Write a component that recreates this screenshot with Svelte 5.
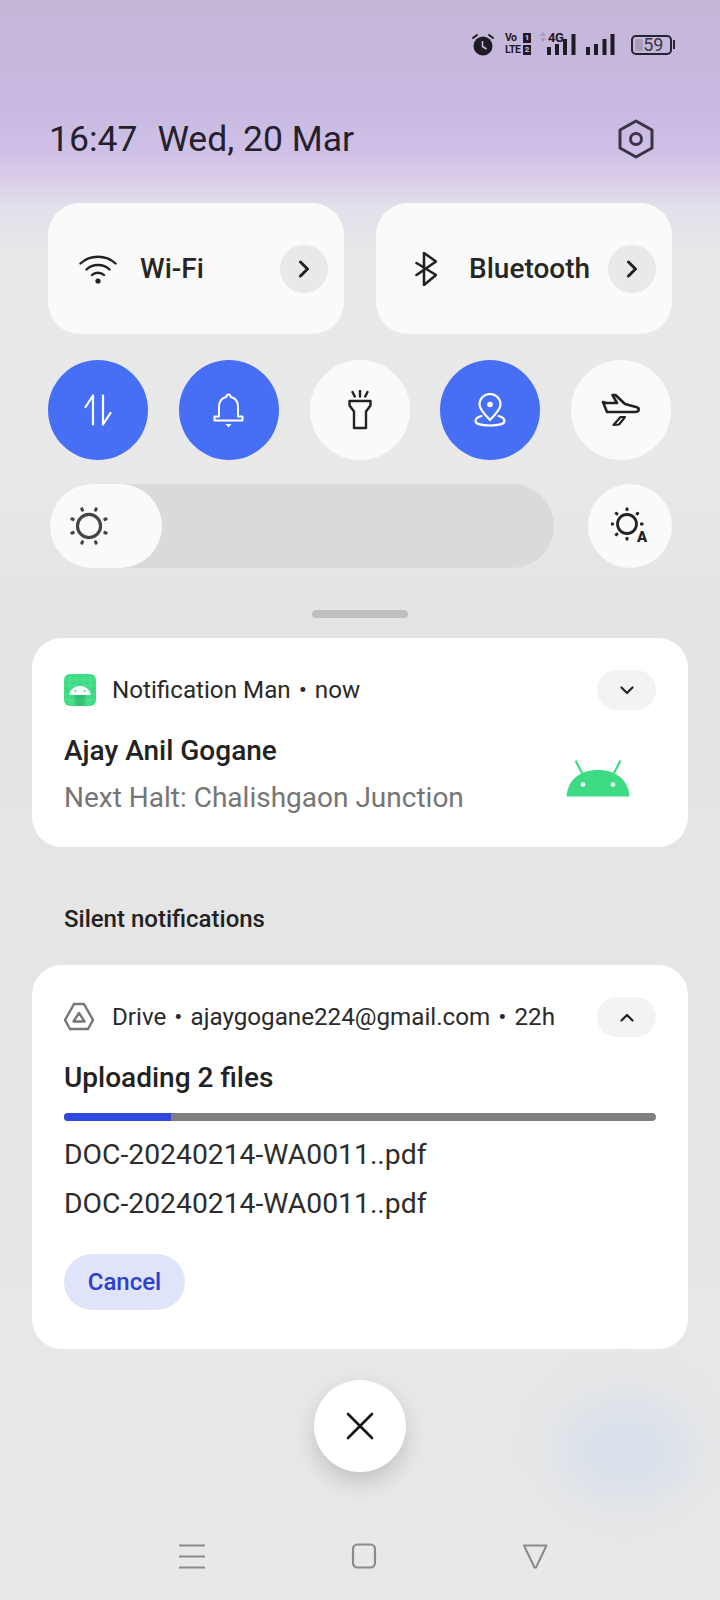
<script>
  const circles = [
    { on: true, icon: 'data' },
    { on: true, icon: 'bell' },
    { on: false, icon: 'torch' },
    { on: true, icon: 'pin' },
    { on: false, icon: 'plane' }
  ];
  const rays = [0, 45, 90, 135, 180, 225, 270, 315];
  const autoRays = [0, 45, 90, 180, 225, 270, 315];
</script>

<div class="page">
  <div class="blob"></div>

  <div class="status">
    <svg class="alarm" width="22" height="23" viewBox="0 0 22 23">
      <circle cx="11" cy="13" r="9.500" fill="#1f1b26"/>
      <path d="M1 5l4-3M21 5l-4-3" stroke="#1f1b26" stroke-width="2" stroke-linecap="round"/>
      <path d="M10.500 8v5.500l4 2.500" stroke="#c6b8df" stroke-width="1.600" fill="none"/>
    </svg>
    <div class="volte">
      <div class="vrow"><span>Vo</span><b>1</b></div>
      <div class="vrow"><span>LTE</span><b>2</b></div>
    </div>
    <div class="net">
      <svg width="6" height="10" viewBox="0 0 6 10"><path d="M3 0L6 4H0zM3 10L0 6h6z" fill="#a79dba"/></svg>
      <span class="fourg">4G</span>
    </div>
    <svg class="sig1" width="30" height="21" viewBox="0 0 30 21">
      <rect x="0" y="13" width="4" height="8" fill="#1f1b26"/>
      <rect x="8" y="10" width="4" height="11" fill="#1f1b26"/>
      <rect x="16" y="5" width="4" height="16" fill="#1f1b26"/>
      <rect x="24.500" y="0" width="4" height="21" fill="#1f1b26"/>
    </svg>
    <svg class="sig2" width="30" height="21" viewBox="0 0 30 21">
      <rect x="0" y="13" width="4" height="8" fill="#1f1b26"/>
      <rect x="8" y="10" width="4" height="11" fill="#1f1b26"/>
      <rect x="16.500" y="5" width="4" height="16" fill="#1f1b26"/>
      <rect x="24.500" y="0" width="4" height="21" fill="#1f1b26"/>
    </svg>
    <div class="battery">
      <div class="charge"></div>
      <span>59</span>
    </div>
    <div class="tip"></div>
  </div>

  <div class="clock">
    <span class="time">16:47</span>
    <span class="date">Wed, 20 Mar</span>
    <svg class="gear" width="36" height="40" viewBox="0 0 36 40">
      <path d="M18 2L34 11V29L18 38L2 29V11Z" fill="none" stroke="#3a3444" stroke-width="3" stroke-linejoin="round"/>
      <circle cx="18" cy="20" r="5.500" fill="none" stroke="#3a3444" stroke-width="3"/>
    </svg>
  </div>

  <div class="tiles">
    <div class="tile">
      <svg class="tile-icon" width="38" height="31" viewBox="0 0 38 31">
        <path d="M1.500 10.500C11 1.500 27 1.500 36.500 10.500M7.500 16.500C13.500 10.500 24.500 10.500 30.500 16.500M13 22C16 19 22 19 25 22" fill="none" stroke="#222" stroke-width="2.400" stroke-linecap="round"/>
        <circle cx="19" cy="28" r="2.600" fill="#222"/>
      </svg>
      <span class="tile-label wifi">Wi-Fi</span>
      <div class="arrow">
        <svg width="12" height="18" viewBox="0 0 12 18"><path d="M2.500 2L9.500 9L2.500 16" fill="none" stroke="#222" stroke-width="3" stroke-linecap="round" stroke-linejoin="round"/></svg>
      </div>
    </div>
    <div class="tile">
      <svg class="tile-icon bt" width="22" height="34" viewBox="0 0 22 34">
        <path d="M1.500 11L21 23L9 33V1L21 9.500L1.500 23" fill="none" stroke="#222" stroke-width="2.600" stroke-linejoin="round" stroke-linecap="round"/>
      </svg>
      <span class="tile-label bluetooth">Bluetooth</span>
      <div class="arrow">
        <svg width="12" height="18" viewBox="0 0 12 18"><path d="M2.500 2L9.500 9L2.500 16" fill="none" stroke="#222" stroke-width="3" stroke-linecap="round" stroke-linejoin="round"/></svg>
      </div>
    </div>
  </div>

  <div class="circles">
    {#each circles as c}
      <div class="circle" class:on={c.on}>
        {#if c.icon === 'data'}
          <svg width="28" height="32" viewBox="0 0 28 32"><path d="M1.500 13L9 1.500V30.500M26.500 19L19 30.500V1.500" fill="none" stroke="#fff" stroke-width="2.200" stroke-linecap="round" stroke-linejoin="round"/></svg>
        {:else if c.icon === 'bell'}
          <svg width="31" height="35" viewBox="0 0 31 35"><path d="M15.500 1.500a2 2 0 0 1 2 2.200C22.500 5 25 9 25 14V23.500H29.500V27.500H1.500V23.500H6V14C6 9 8.500 5 13.500 3.700A2 2 0 0 1 15.500 1.500Z" fill="none" stroke="#fff" stroke-width="2" stroke-linejoin="round"/><path d="M12.500 31h6l-3 3.500z" fill="#fff"/></svg>
        {:else if c.icon === 'torch'}
          <svg width="24" height="40" viewBox="0 0 24 40"><path d="M1.500 11H22.500V15.500L18 21.500V38H6V21.500L1.500 15.500Z" fill="none" stroke="#222" stroke-width="2.400" stroke-linejoin="round"/><path d="M12 1V6.500M4.500 2L6.800 6.500M19.500 2L17.200 6.500" stroke="#222" stroke-width="2.400" stroke-linecap="round"/></svg>
        {:else if c.icon === 'pin'}
          <svg width="32" height="34" viewBox="0 0 32 34"><path d="M16 27C10.500 21.500 5.500 16 5.500 11.500A10.500 10.500 0 0 1 26.500 11.500C26.500 16 21.500 21.500 16 27Z" fill="none" stroke="#fff" stroke-width="2.200" stroke-linejoin="round"/><circle cx="16" cy="11.500" r="2.800" fill="#fff"/><path d="M7.500 23C3.500 24 1.500 26 1.500 28C1.500 31 8 32.500 16 32.500S30.500 31 30.500 28C30.500 26 28.500 24 24.500 23" fill="none" stroke="#fff" stroke-width="2.200" stroke-linecap="round"/></svg>
        {:else}
          <svg width="40" height="34" viewBox="12 9 40 34"><path d="M14 18L18 28H46C50.500 28 51 24 47 23L36 20L26.500 11H23.500L28 19H17Z" fill="none" stroke="#222" stroke-width="2.600" stroke-linejoin="round"/><path d="M24.500 41L31.500 33H36L30 40.500Z" fill="none" stroke="#222" stroke-width="2.200" stroke-linejoin="round"/></svg>
        {/if}
      </div>
    {/each}
  </div>

  <div class="bright">
    <div class="slider">
      <div class="thumb">
        <svg width="42" height="42" viewBox="0 0 40 40">
          <circle cx="20" cy="20" r="11" fill="none" stroke="#444" stroke-width="3"/>
          {#each rays as r}
            <rect x="18.500" y="1" width="3" height="4" rx="1" fill="#444" transform="rotate({r + 22.500} 20 20)"/>
          {/each}
        </svg>
      </div>
    </div>
    <div class="auto">
      <svg width="38" height="38" viewBox="0 0 38 38">
        <circle cx="16" cy="17" r="9.500" fill="none" stroke="#222" stroke-width="2.800"/>
        {#each autoRays as r}
          <rect x="14.500" y="0.500" width="3" height="3.500" rx="1" fill="#222" transform="rotate({r} 16 17)"/>
        {/each}
      </svg>
      <span class="auto-a">A</span>
    </div>
  </div>

  <div class="handle"></div>

  <div class="card card-one">
    <div class="head">
      <div class="app-icon">
        <svg width="32" height="32" viewBox="0 0 32 32">
          <rect width="32" height="32" rx="6" fill="#3ddc84"/>
          <path d="M6 0V32M12 0V32M20 0V32M26 0V32M0 6H32M0 12H32M0 20H32M0 26H32" stroke="#fff" stroke-opacity=".12" stroke-width="1"/>
          <path d="M10 21L12 32H20L22 21Z" fill="#2fae6a" fill-opacity=".6"/>
          <path d="M5.500 21C6 15.500 10 12 16 12S26 15.500 26.500 21Z" fill="#fff"/>
          <circle cx="11.500" cy="17" r="1" fill="#3ddc84"/><circle cx="20.500" cy="17" r="1" fill="#3ddc84"/>
        </svg>
      </div>
      <span class="meta">Notification Man <span class="dot">•</span> now</span>
      <div class="toggle">
        <svg width="14" height="9" viewBox="0 0 14 9"><path d="M1.500 1.500L7 7L12.500 1.500" fill="none" stroke="#222" stroke-width="2.200" stroke-linecap="round" stroke-linejoin="round"/></svg>
      </div>
    </div>
    <div class="msg">
      <div class="msg-text">
        <div class="title">Ajay Anil Gogane</div>
        <div class="sub">Next Halt: Chalishgaon Junction</div>
      </div>
      <svg class="droid" width="64" height="37" viewBox="0 0 64 37">
        <path d="M0.500 36.500C1.500 20 14 10 32 10S62.500 20 63.500 36.500Z" fill="#3ddc84"/>
        <path d="M16 13L10 1.500M48 13L54 1.500" stroke="#3ddc84" stroke-width="2.200" stroke-linecap="round"/>
        <circle cx="17" cy="24.500" r="2.300" fill="#fff"/><circle cx="47" cy="24.500" r="2.300" fill="#fff"/>
      </svg>
    </div>
  </div>

  <div class="silent">Silent notifications</div>

  <div class="card card-two">
    <div class="head">
      <div class="app-icon">
        <svg width="30" height="30" viewBox="0 0 30 30">
          <path d="M10 2H20L29 18L24 27H6L1 18Z" fill="none" stroke="#777" stroke-width="2.400" stroke-linejoin="round"/>
          <path d="M15 11L20.500 19.500H9.500Z" fill="none" stroke="#777" stroke-width="2.400" stroke-linejoin="round"/>
        </svg>
      </div>
      <span class="meta">Drive <span class="dot">•</span> ajaygogane224@gmail.com <span class="dot">•</span> 22h</span>
      <div class="toggle">
        <svg width="14" height="9" viewBox="0 0 14 9"><path d="M1.500 7.500L7 2L12.500 7.500" fill="none" stroke="#222" stroke-width="2.200" stroke-linecap="round" stroke-linejoin="round"/></svg>
      </div>
    </div>
    <div class="title upload">Uploading 2 files</div>
    <div class="progress"><div class="bar" style="width: 18%"></div></div>
    <div class="file first">DOC-20240214-WA0011..pdf</div>
    <div class="file">DOC-20240214-WA0011..pdf</div>
    <div class="cancel">Cancel</div>
  </div>

  <div class="fab">
    <svg width="30" height="30" viewBox="0 0 30 30"><path d="M3 3L27 27M27 3L3 27" stroke="#111" stroke-width="2.600" stroke-linecap="round"/></svg>
  </div>

  <div class="nav">
    <svg width="26" height="25" viewBox="0 0 26 25"><path d="M0 1.500H26M0 12.500H26M0 23.500H26" stroke="#8a8a8a" stroke-width="2.200"/></svg>
    <svg width="26" height="26" viewBox="0 0 26 26"><rect x="2" y="1.500" width="22" height="23" rx="4.500" fill="none" stroke="#8a8a8a" stroke-width="2.200"/></svg>
    <svg width="26" height="26" viewBox="0 0 26 26"><path d="M2 2.500H24.500L14 24.500H12.500Z" fill="none" stroke="#8a8a8a" stroke-width="2" stroke-linejoin="round"/></svg>
  </div>
</div>

<style>
  :global(body) {
    margin: 0;
    background: #e6e6e6;
  }
  .page {
    position: relative;
    width: 720px;
    height: 1600px;
    overflow: hidden;
    box-sizing: border-box;
    font-family: Roboto, "Liberation Sans", sans-serif;
    color: #222;
    background: linear-gradient(#c3b6d6 0, #c9bae3 115px, #cec0e6 150px, #d9cde9 180px, #e2dfeb 205px, #e7e9e8 260px, #e8e9e8 460px, #e4e4e4 600px, #e8e8e8 1500px);
  }
  .blob {
    position: absolute;
    left: 555px;
    top: 1395px;
    width: 140px;
    height: 110px;
    border-radius: 50%;
    background: #d9e0ea;
    filter: blur(24px);
  }

  .status {
    position: relative;
    display: flex;
    align-items: center;
    height: 44px;
    padding: 22px 0 0 472px;
    box-sizing: content-box;
  }
  .volte {
    margin-left: 11px;
    width: 26px;
    font-size: 10.500px;
    font-weight: 700;
    letter-spacing: -0.500px;
    line-height: 12.500px;
    color: #1f1b26;
  }
  .vrow {
    display: flex;
    justify-content: space-between;
    align-items: center;
  }
  .vrow span {
    white-space: nowrap;
  }
  .vrow b {
    background: #1f1b26;
    color: #c6b8df;
    font-size: 8px;
    letter-spacing: 0;
    width: 8px;
    height: 10px;
    line-height: 10px;
    text-align: center;
  }
  .net {
    display: flex;
    align-items: flex-start;
    gap: 2px;
    margin-left: 9px;
    height: 21px;
    margin-top: -3px;
  }
  .fourg {
    font-size: 13px;
    font-weight: 700;
    line-height: 11px;
    color: #1f1b26;
    letter-spacing: -0.500px;
  }
  .sig1 { margin-left: -16px; margin-top: 1px; }
  .sig2 { margin-left: 9px; margin-top: 1px; }
  .battery {
    position: relative;
    margin-left: 15px;
    width: 34px;
    height: 16px;
    border: 2px solid #27222f;
    border-radius: 5px;
    display: flex;
    align-items: center;
    justify-content: center;
    font-size: 18px;
    color: #3a3444;
    padding-left: 3px;
    margin-top: 1px;
  }
  .battery span { position: relative; }
  .charge {
    position: absolute;
    left: 2px;
    top: 2px;
    bottom: 2px;
    width: 8px;
    background: #a79dba;
    border-radius: 2px;
  }
  .tip {
    width: 2px;
    height: 9px;
    margin-left: 1px;
    margin-top: 1px;
    background: #27222f;
  }

  .clock {
    display: flex;
    align-items: center;
    height: 40px;
    margin-top: 53px;
    padding: 0 66px 0 49px;
    font-size: 35.500px;
    color: #25212c;
  }
  .date { margin-left: 20px; }
  .gear { margin-left: auto; }

  .tiles {
    display: flex;
    gap: 32px;
    margin: 44px 48px 0;
  }
  .tile {
    flex: 1;
    height: 131px;
    display: flex;
    align-items: center;
    box-sizing: border-box;
    padding: 0 16px 0 31px;
    background: #fafafa;
    border-radius: 32px;
  }
  .tile-icon { flex: none; }
  .tile-label {
    font-size: 28px;
    font-weight: 500;
    color: #262626;
  }
  .wifi { margin-left: 23px; }
  .bt { margin-left: 8px; }
  .bluetooth { margin-left: 32px; }
  .arrow {
    margin-left: auto;
    width: 48px;
    height: 48px;
    border-radius: 50%;
    background: #e9e9e9;
    display: flex;
    align-items: center;
    justify-content: center;
  }

  .circles {
    display: flex;
    justify-content: space-between;
    margin: 26px 49px 0 48px;
  }
  .circle {
    width: 100px;
    height: 100px;
    border-radius: 50%;
    background: #fafafa;
    display: flex;
    align-items: center;
    justify-content: center;
  }
  .circle.on { background: #476ff5; }

  .bright {
    display: flex;
    justify-content: space-between;
    margin: 24px 48px 0 50px;
  }
  .slider {
    width: 504px;
    height: 84px;
    border-radius: 42px;
    background: #d9dbda;
  }
  .thumb {
    width: 112px;
    height: 84px;
    border-radius: 42px;
    background: #fafafa;
    display: flex;
    align-items: center;
    padding-left: 18px;
    box-sizing: border-box;
  }
  .auto {
    position: relative;
    width: 84px;
    height: 84px;
    border-radius: 50%;
    background: #fafafa;
    display: flex;
    align-items: center;
    justify-content: center;
  }
  .auto-a {
    position: absolute;
    left: 49px;
    top: 44px;
    font-size: 15px;
    font-weight: 900;
    line-height: 18px;
    color: #222;
  }

  .handle {
    width: 96px;
    height: 8px;
    margin: 42px auto 0;
    border-radius: 4px;
    background: #bfbfbf;
  }

  .card {
    position: relative;
    margin: 20px 32px 0;
    padding: 32px 32px 0;
    background: #fff;
    border-radius: 30px;
    box-sizing: border-box;
  }
  .card-one { height: 209px; }
  .card-two { height: 384px; margin-top: 0; }
  .head {
    display: flex;
    align-items: center;
    height: 40px;
  }
  .app-icon {
    width: 48px;
    flex: none;
    display: flex;
    align-items: center;
  }
  .meta {
    font-size: 24.200px;
    color: #2a2a2a;
    white-space: nowrap;
  }
  .dot { margin: 0 2px; }
  .toggle {
    margin-left: auto;
    width: 59px;
    height: 40px;
    border-radius: 20px;
    background: #f3f3f3;
    display: flex;
    align-items: center;
    justify-content: center;
  }
  .msg {
    display: flex;
    justify-content: space-between;
    align-items: flex-end;
  }
  .title {
    font-size: 28px;
    font-weight: 500;
    line-height: 32px;
    color: #222;
  }
  .msg-text { padding-top: 25px; }
  .sub {
    margin-top: 15px;
    font-size: 28px;
    line-height: 32px;
    color: #757575;
  }
  .droid { margin: 0 26px 17px 0; }

  .silent {
    height: 118px;
    box-sizing: border-box;
    padding: 57px 64px 0;
    font-size: 24px;
    font-weight: 500;
    line-height: 30px;
    color: #222;
  }

  .upload { margin-top: 25px; }
  .progress {
    height: 8px;
    margin-top: 19px;
    border-radius: 4px;
    background: #808080;
    overflow: hidden;
  }
  .bar {
    height: 100%;
    background: #2f49e0;
  }
  .file {
    font-size: 28.300px;
    line-height: 32px;
    color: #2d2d2d;
    margin-top: 17px;
  }
  .file.first { margin-top: 18px; }
  .cancel {
    width: 121px;
    height: 56px;
    margin-top: 34px;
    border-radius: 28px;
    background: #e0e4fb;
    color: #2d3fce;
    font-size: 24px;
    font-weight: 500;
    display: flex;
    align-items: center;
    justify-content: center;
  }

  .fab {
    position: relative;
    width: 92px;
    height: 92px;
    margin: 31px auto 0;
    border-radius: 50%;
    background: #fff;
    box-shadow: 0 10px 22px rgba(0, 0, 0, 0.16);
    display: flex;
    align-items: center;
    justify-content: center;
  }

  .nav {
    position: relative;
    display: flex;
    justify-content: space-between;
    align-items: center;
    margin: 71px 172px 0 179px;
  }
</style>
